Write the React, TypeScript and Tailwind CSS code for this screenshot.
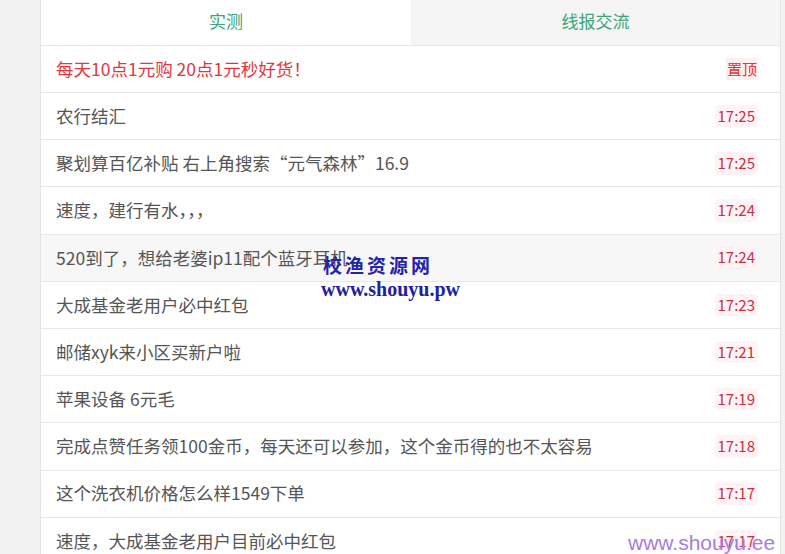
import React from 'react';

const rows = [
  { text: '农行结汇', time: '17:25' },
  { text: '聚划算百亿补贴 右上角搜索“元气森林”16.9', time: '17:25' },
  { text: '速度，建行有水，，，', time: '17:24' },
  { text: '520到了，想给老婆ip11配个蓝牙耳机', time: '17:24', hover: true },
  { text: '大成基金老用户必中红包', time: '17:23' },
  { text: '邮储xyk来小区买新户啦', time: '17:21' },
  { text: '苹果设备 6元毛', time: '17:19' },
  { text: '完成点赞任务领100金币，每天还可以参加，这个金币得的也不太容易', time: '17:18' },
  { text: '这个洗衣机价格怎么样1549下单', time: '17:17' },
  { text: '速度，大成基金老用户目前必中红包', time: '17:17' },
];

export default function App() {
  return (
    <div
      className="relative w-[785px] h-[554px] overflow-hidden bg-[#f2f2f2] flex"
      style={{ fontFamily: '"Microsoft YaHei", "Noto Sans CJK SC", sans-serif' }}
    >
      <div className="ml-[40px] w-[741px] bg-white border-l border-r border-[#e3e3e3] flex flex-col">
        {/* Tabs */}
        <div className="flex h-[46px] shrink-0 border-b border-[#e8e8e8]">
          <div className="w-[370px] flex items-center justify-center pb-[3px] text-[17px] text-[#3aa57a] bg-white">
            实测
          </div>
          <div className="flex-1 flex items-center justify-center pb-[3px] text-[17px] text-[#3aa57a] bg-[#f5f5f5]">
            线报交流
          </div>
        </div>

        {/* Pinned */}
        <div className="flex items-center justify-between h-[47px] shrink-0 border-b border-[#e8e8e8] pl-[15px] pr-[22px]">
          <span className="text-[17.5px] text-[#e0383c] whitespace-nowrap">每天10点1元购 20点1元秒好货！</span>
          <span className="text-[15px] text-[#d9363a] bg-[#fff0f0] px-[1px]">置顶</span>
        </div>

        {rows.map((r, i) => (
          <div
            key={i}
            className={`flex items-center justify-between h-[47.2px] shrink-0 border-b border-[#e8e8e8] pl-[15px] pr-[22px] ${
              r.hover ? 'bg-[#f7f7f7]' : 'bg-white'
            }`}
          >
            <span className="text-[17.5px] text-[#555555] whitespace-nowrap">{r.text}</span>
            <span className="text-[15px] text-[#c9303e] bg-[#fff3f5] px-[3px] rounded-sm">{r.time}</span>
          </div>
        ))}
      </div>

      {/* Watermarks */}
      <div
        className="absolute left-[323px] top-[251px] text-[19px] font-bold tracking-[3px] text-[#2424a8]"
        style={{ fontFamily: '"Noto Sans CJK SC", serif' }}
      >
        校渔资源网
      </div>
      <div
        className="absolute left-[321px] top-[274px] text-[20px] font-bold text-[#2020a0]"
        style={{ fontFamily: '"Liberation Serif", serif' }}
      >
        www.shouyu.pw
      </div>
      <div
        className="absolute left-[628px] top-[527px] text-[21px] text-[#a77de0]"
        style={{ fontFamily: '"Liberation Sans", sans-serif' }}
      >
        www.shouyu.ee
      </div>
    </div>
  );
}
